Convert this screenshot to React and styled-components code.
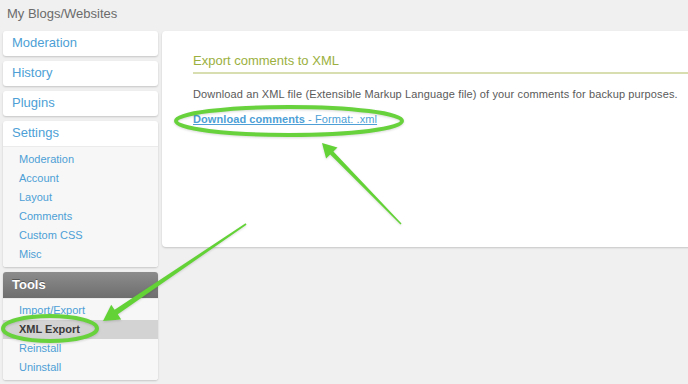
import React from "react";
import styled, { createGlobalStyle } from "styled-components";

const Global = createGlobalStyle`
  html, body { margin: 0; padding: 0; background: #f0f0f0; }
  body { font-family: "Liberation Sans", Arial, Helvetica, sans-serif; }
`;

const Page = styled.div`
  position: relative;
  width: 688px;
  height: 384px;
  overflow: hidden;
  background: #f0f0f0;
`;

const Title = styled.div`
  height: 28px;
  line-height: 28px;
  padding-left: 7px;
  font-size: 13px;
  color: #6b6b6b;
`;

const Columns = styled.div`
  display: flex;
  align-items: flex-start;
  gap: 4px;
  padding-left: 3px;
  margin-top: 3px;
`;

const Sidebar = styled.nav`
  width: 155px;
  flex: none;
  display: flex;
  flex-direction: column;
  gap: 5px;
`;

const Box = styled.div`
  background: #fff;
  border-radius: 3px;
  box-shadow: 0 1px 2px rgba(0, 0, 0, 0.18);
  overflow: hidden;
`;

const BoxLink = styled.div`
  height: 25px;
  line-height: 23px;
  padding-left: 9px;
  box-sizing: border-box;
  font-size: 13px;
  color: #4d9fd6;
`;

const DarkHead = styled.div`
  height: 26px;
  line-height: 25px;
  padding-left: 9px;
  font-size: 13px;
  font-weight: bold;
  color: #fff;
  text-shadow: 0 -1px 0 rgba(0, 0, 0, 0.35);
  background: linear-gradient(#8c8c8c, #6e6e6e);
`;

const SubList = styled.div`
  background: #f7f7f7;
  border-top: 1px solid #ebebeb;
  padding: ${(p) => p.$pad};
`;

const SubItem = styled.div`
  height: 19px;
  line-height: 19px;
  padding-left: 16px;
  font-size: 11px;
  color: ${(p) => (p.$active ? "#3a3a3a" : "#4d9fd6")};
  font-weight: ${(p) => (p.$active ? "bold" : "normal")};
  background: ${(p) => (p.$active ? "#d3d3d3" : "transparent")};
`;

const Panel = styled.main`
  flex: none;
  width: 560px;
  height: 216px;
  box-sizing: border-box;
  background: #fff;
  border-radius: 4px;
  box-shadow: 0 1px 2px rgba(0, 0, 0, 0.18);
  padding: 22px 0 0 31px;
`;

const Heading = styled.h2`
  margin: 0;
  font-size: 13px;
  font-weight: normal;
  line-height: 16px;
  color: #9bb03e;
  padding-bottom: 3px;
  border-bottom: 2px solid #d8deb0;
`;

const Para = styled.p`
  margin: 12px 0 0;
  font-size: 11px;
  letter-spacing: 0.13px;
  line-height: 16px;
  color: #5a5a5a;
`;

const LinkLine = styled.div`
  margin-top: 9px;
  font-size: 11px;
  letter-spacing: 0.08px;
  line-height: 16px;
  color: #4d9fd6;
  text-decoration: underline;
`;

const Bold = styled.span`
  font-weight: bold;
`;

const Overlay = styled.svg`
  position: absolute;
  left: 0;
  top: 0;
  width: 688px;
  height: 384px;
  pointer-events: none;
  filter: drop-shadow(0 1px 1px rgba(0, 0, 0, 0.15));
`;

const settings = ["Moderation", "Account", "Layout", "Comments", "Custom CSS", "Misc"];
const tools = ["Import/Export", "XML Export", "Reinstall", "Uninstall"];

export default function App() {
  return (
    <Page>
      <Global />
      <Title>My Blogs/Websites</Title>
      <Columns>
        <Sidebar>
          <Box><BoxLink>Moderation</BoxLink></Box>
          <Box><BoxLink>History</BoxLink></Box>
          <Box><BoxLink>Plugins</BoxLink></Box>
          <Box>
            <BoxLink>Settings</BoxLink>
            <SubList $pad="3px 0 3px">
              {settings.map((s) => (
                <SubItem key={s}>{s}</SubItem>
              ))}
            </SubList>
          </Box>
          <Box>
            <DarkHead>Tools</DarkHead>
            <SubList $pad="2px 0 3px">
              {tools.map((s) => (
                <SubItem key={s} $active={s === "XML Export"}>{s}</SubItem>
              ))}
            </SubList>
          </Box>
        </Sidebar>
        <Panel>
          <Heading>Export comments to XML</Heading>
          <Para>
            Download an XML file (Extensible Markup Language file) of your comments for backup purposes.
          </Para>
          <LinkLine>
            <Bold>Download comments</Bold> - Format: .xml
          </LinkLine>
        </Panel>
      </Columns>
      <Overlay viewBox="0 0 688 384">
        <ellipse cx="289" cy="121" rx="113" ry="14" fill="none" stroke="#67d23c" strokeWidth="4" />
        <ellipse cx="50" cy="328.5" rx="47" ry="12.5" fill="none" stroke="#67d23c" strokeWidth="4" />
        <polygon
          fill="#62d236"
          points="322,143 337.5,147.4 333.4,151.4 401.5,223.5 400.5,224.5 330.2,154.6 326.1,158.6"
        />
        <polygon
          fill="#62d236"
          points="103,321 121.2,319.4 117.8,314.3 246.5,224.7 245.6,223.3 114.6,309.8 111.2,304.7"
        />
      </Overlay>
    </Page>
  );
}
